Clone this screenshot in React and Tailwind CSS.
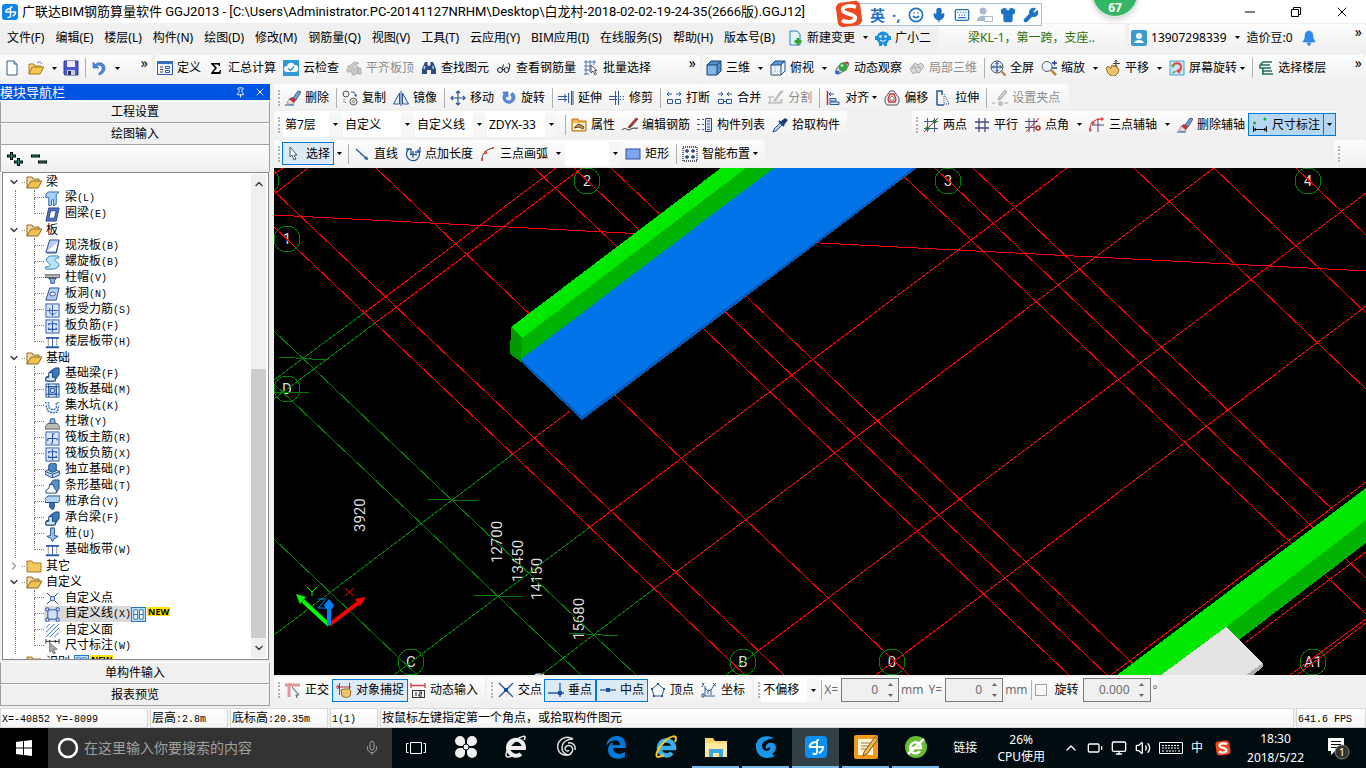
import { useState } from "react";
import clsx from "clsx";
import { Battery, ChevronDown, ChevronRight, ChevronUp, Keyboard, Mic, Minus, Monitor, Pin, Shirt, Smile, Volume2, Wrench, X } from "lucide-react";

const B = "#2b5797";

// 16x16 drawings used by the toolbars and the tree
const icons = {
  app: <><rect width="16" height="16" rx="3" fill="#0a84f0" /><path d="M8.500 3v9c0 1.500-2 2-3 1M3 8h10.500c0 2-1 3.500-3 4M8.500 4.500C5.500 4.500 4 6 3.500 8M8.500 3h2" stroke="#fff" strokeWidth="1.400" fill="none" /></>,
  doc: <><path d="M3 1h7l3 3v11H3z" fill="#fff" stroke="#3a5a8a" /><path d="M10 1v3h3" fill="#cfe0f5" stroke="#3a5a8a" /></>,
  open: <><path d="M1 14V4h5l1 2h6v2" fill="#f6d77c" stroke="#a87a20" /><path d="M1 14l3-7h12l-4 7z" fill="#f9c84e" stroke="#a87a20" /><path d="M9 3c2-2 4-1 5 1" fill="none" stroke="#4a6a9a" /></>,
  save: <><path d="M1 1h14v14H2l-1-1z" fill="#4a5bd0" stroke="#2a3a90" /><path d="M4 1h8v6H4z" fill="#eef" /><path d="M4 10h8v5H4z" fill="#c8cce8" /><path d="M5 11h3v4H5z" fill="#334" /></>,
  undo: <path d="M2 2v6h6L5.500 6c3-2 6 0 5.500 3-.3 2-2 3-3 4v2c4-1 6-4 6-7 0-5-6-7-10-3.500z" fill="#4f86e0" stroke="#2d5cae" strokeWidth=".6" />,
  define: <><rect x=".5" y="1.500" width="15" height="13" fill="#eef3fb" stroke="#2f5fae" /><path d="M0 1h16v3H0z" fill="#3b6fc4" /><path d="M3 7h3M3 9.500h3M3 12h3" stroke="#444" /><path d="M8.500 6.500h4v2h-4zM8.500 10.500h4v2h-4z" fill="none" stroke="#2f5fae" /></>,
  sigma: <path d="M3 3h9v3h-1L10 4.500H6L9 8l-3.500 4H11l1-2h1l-.5 4H3v-1l4-5-4-4z" fill="#000" />,
  cloud: <><rect width="16" height="16" fill="#2f9ad8" /><path d="M4 12a3 3 0 0 1 0-6 4 4 0 0 1 7.500-1A3.500 3.500 0 0 1 12 12z" fill="#fff" /><path d="M5 8.500l2.500 2L11 6.500" stroke="#2f9ad8" strokeWidth="1.500" fill="none" /></>,
  flatGray: <path d="M1 7l8-5 4 1-7 5zM1 9h6l5-3v7l-4 2H6v-3H1zM12 8h3v6h-3z" fill="#c9c9c9" stroke="#a5a5a5" strokeWidth=".7" />,
  binoc: <><path d="M4 2h2.500v3L8 6l1.500-1V2H12l3 7v5h-5v-4H6v4H1V9z" fill="#2e4c80" /><path d="M4 6L3 9M11.500 6l1 3" stroke="#b6cdf0" strokeWidth="1.500" /></>,
  glasses: <><circle cx="4" cy="10" r="2.500" fill="#dde8f5" stroke="#222" /><circle cx="10.500" cy="10" r="2.500" fill="#dde8f5" stroke="#222" /><path d="M6.500 9.500h2M13 9.500l1-5-2-1M6.500 8.500l1-4" stroke="#222" fill="none" /></>,
  batch: <><path d="M1 2h12M1 6h8M1 10h6M3 0v15M7 0v12M11 0v5M1 14h5" stroke="#5577aa" /><path d="M8 5v8l2-2 2 4 1.500-1-2-3.500H14z" fill="#fff" stroke="#555" /></>,
  cube: <><path d="M1 5l4-4h10v10l-4 4H1z" fill="#4f93d0" /><path d="M1 5h10v10H1z" fill="#7db8e8" /><path d="M1 5l4-4h10v10l-4 4H1zM1 5h10v10M11 5l4-4" fill="none" stroke="#1d3f66" /></>,
  cubeTop: <><path d="M1 5h10v10H1zM11 5l4-4v10l-4 4z" fill="#eef5fc" /><path d="M1 5l4-4h10l-4 4z" fill="#5b9bd8" /><path d="M1 5l4-4h10v10l-4 4H1zM1 5h10v10M11 5l4-4" fill="none" stroke="#274a7c" /><path d="M5 6v5M5 11h6M5 11l-4 4" stroke="#8fb3dd" strokeDasharray="1 1" /></>,
  orbit: <><ellipse cx="8" cy="8" rx="8" ry="3.500" transform="rotate(-40 8 8)" fill="#dde" stroke="#667" /><circle cx="9" cy="7" r="4.500" fill="#3aa04a" /><circle cx="8" cy="5.500" r="1.500" fill="#a8e6a8" /><circle cx="3.500" cy="12.500" r="2" fill="#2d6cc8" /><circle cx="13" cy="3" r="1.500" fill="#d33" /></>,
  localGray: <path d="M1 9l5-6 3 2 3-2 3 3-5 7-3-1-3 2zM4 5l5 8M8 4l4 6M2 8l10-1" fill="#ddd" stroke="#aaa" />,
  fit: <><circle cx="7" cy="7" r="6" fill="#e6eefa" stroke="#445" /><path d="M7 2.500v9M2.500 7h9M5.500 4L7 2.500 8.500 4M5.500 10L7 11.500 8.500 10M4 5.500L2.500 7 4 8.500M10 5.500L11.500 7 10 8.500" stroke="#1c3f94" fill="none" /><path d="M11.500 11.500l4 4" stroke="#b07a30" strokeWidth="2" /></>,
  zoom: <><circle cx="6" cy="6.500" r="5" fill="#eaf2fb" stroke="#557" /><path d="M10 10l5 5" stroke="#c08a2a" strokeWidth="2.500" /><path d="M11 3h5M13.500.5v5M11 8h5" stroke="#1c3f94" strokeWidth="1.300" /></>,
  hand: <><path d="M1 8l2-2 3 3V6l2-1 1 2 1-2 2 1v2l2 1-1 4-3 3H6l-3-3z" fill="#edc46a" stroke="#9a6d1c" /><path d="M11 0v7M8 3.500h7M9.500 1.500L11 0l1.500 1.500" stroke="#345" fill="none" /></>,
  screen: <><rect x="1" y="1" width="14" height="14" fill="#c5e6f5" stroke="#4aa3c8" /><path d="M4 7c0-5 8-5 8 0s-3 4-3 4" fill="none" stroke="#e8443a" strokeWidth="2" /><path d="M11 8l-4 3 4 3z" fill="#e8443a" /><path d="M2 5l4-1-2 4zM3 14c1-3 3-4 4-2" fill="#5aa02c" /></>,
  floors: <path d="M2 5l3-3h9M2 5h10M4 8h9M4 11h10M4 14h11M2 5v3h3v6" stroke="#23705c" strokeWidth="1.500" fill="none" />,
  erase: <><path d="M8 8l5-7 3 1-5 8z" fill="#6f9ee0" stroke="#234" strokeWidth=".7" /><path d="M4 9l3-2 4 3-2 3z" fill="#c03030" /><path d="M4 9l5 4-3 2-4-2z" fill="#f3d9d9" stroke="#555" strokeWidth=".5" /><path d="M0 15h9" stroke="#2b5797" /></>,
  copy: <><circle cx="4" cy="4" r="3" fill="#eee" stroke="#555" /><circle cx="11.500" cy="11.500" r="3.500" fill="#eee" stroke="#555" /><circle cx="11.500" cy="11.500" r="1.200" fill="none" stroke="#777" /><path d="M9 2h3l2 4M12.500 5l1.500 1.500V4" stroke="#2b5797" fill="none" /><path d="M2 9v3l3 1" stroke="#2b5797" strokeDasharray="1 1" fill="none" /></>,
  mirror: <path d="M6.500 3v11h-6zM9.500 3v11h6zM8 1v15" fill="#e8eef8" stroke={B} />,
  move: <path d="M8 1v14M1 8h14M6 3l2-2 2 2M6 13l2 2 2-2M3 6L1 8l2 2M13 6l2 2-2 2" stroke="#2b5797" strokeWidth="1.200" fill="none" />,
  rotate: <path d="M3 4a6 6 0 1 0 8.500-1.500L9.500 5a3.200 3.200 0 1 1-4.500 1l2 1V2H2z" fill="#5a8be0" stroke="#2b57a7" strokeWidth=".6" />,
  extend: <path d="M0 6.500h9M0 9.500h9M7 4v8M10.500 3v10M13.500 1v14M15 1v14" stroke={B} fill="none" />,
  trim: <path d="M0 6.500h8M0 9.500h8M6.500 1v14M9.500 1v14M11 6.500h1M14 6.500h1M11 9.500h1M14 9.500h1" stroke={B} fill="none" />,
  brk: <path d="M1 4h5M3 2L1 4l2 2M10 4h5M13 2l2 2-2 2M1.500 9.500h5v4h-5zM9.500 9.500h5v4h-5z" stroke={B} fill="none" />,
  join: <path d="M1 4h5M4 2l2 2-2 2M10 4h5M12 2l-2 2 2 2M1.500 9.500h5v4h-5zM9.500 9.500h5v4h-5zM6 11.500h4" stroke={B} fill="none" />,
  splitGray: <path d="M0 7h6M0 13h14v-4M2 13V7M12 2l3-1-7 9-2 1 1-2z" stroke="#aaa" fill="#ddd" />,
  align: <><path d="M2.500 1v14" stroke="#c22" strokeWidth="1.500" /><path d="M4 4h5M6 2L4 4l2 2" stroke={B} fill="none" /><path d="M5 8.500h6v2.500H5zM5 12h9v2.500H5z" fill="#dde6f5" stroke={B} /></>,
  offset: <><path d="M4 4l2-3h4l2 3 3 4v4l-2 3H3l-2-3V8z" fill="#f5f5f5" stroke="#456" /><path d="M6 4h4l2 5-1 3H5L4 9z" fill="#fdd" stroke="#c33" strokeWidth="1.300" /><path d="M6 10V8l2-2 2 2v2z" fill="#fff" stroke="#456" strokeWidth=".7" /></>,
  stretch: <><path d="M2 15V1h5v4M2 15h7" stroke={B} strokeWidth="1.500" fill="none" /><path d="M9 4l5 10M9 6v8h5" stroke={B} fill="none" strokeDasharray="1 1" /></>,
  gripGray: <path d="M0 13h3M12 13h4M7 12h3v3H7zM6 10l1-3 6-7 2 2-6 7z" stroke="#aaa" fill="#ccc" />,
  props: <><path d="M1 2h6l1 2h7v10H1z" fill="#f6b84a" stroke="#b5761c" /><path d="M2 6h12v7H2z" fill="#fff3d0" /><path d="M3 11l4-4 3 1 3 2-1 2-4-2z" fill="#c79b50" stroke="#543" /></>,
  rebar: <><path d="M0 13c4-4 5 2 9-1 3-2 4 0 7-1" stroke="#222" fill="none" /><path d="M7 9l7-8 2 1-7 8-3 1z" fill="#c03a2a" stroke="#432" strokeWidth=".7" /></>,
  list: <><path d="M8.500 1.500h6v13h-6z" fill="#dbe7f6" stroke="#446" /><path d="M10 4h3M10 7h3M10 10h3M10 12.500h3" stroke={B} /><path d="M0 2.500h3M0 7.500h3M0 12.500h3M5 2.500h2M5 7.500h2M5 12.500h2" stroke="#557" /></>,
  picker: <><path d="M8 5l5-4 3 2-4 5z" fill="#1d3f74" /><path d="M7 4l5 5" stroke="#1d3f74" strokeWidth="2" /><path d="M8 6l2 2-6 6-3 1 1-3z" fill="#aecdf2" stroke="#2b5797" /></>,
  twoPt: <><path d="M4.500 1v14M11.500 1v14M1 4.500h14M1 11.500h14" stroke="#445a8c" /><path d="M1 15L15 1" stroke="#b22" /><circle cx="4.500" cy="11.500" r="2" fill="#2c7a2c" /><circle cx="11.500" cy="4.500" r="2" fill="#2c7a2c" /></>,
  parallel: <path d="M5 1v14M11 1v14M1 5h14M1 11h14" stroke="#4a4a7c" strokeWidth="1.300" />,
  ptAngle: <><path d="M4 1v14M9 1v14M0 4.500h13M0 10.500h10" stroke="#4a4a7c" /><path d="M1 15L14 1" stroke="#c22" /><circle cx="13" cy="11" r="2" fill="#fff" stroke="#c22" strokeWidth="1.500" /></>,
  arcAxis: <><path d="M9 1v14M3 8h12" fill="none" stroke="#4a4a7c" /><path d="M1 13C1 6 4 2 14 2" fill="none" stroke="#d22" /><path d="M0 12h2v2H0zM3 5h2v2H3zM12 1h2v2h-2z" fill="#fff" stroke="#d22" /></>,
  dim: <><path d="M1.500 9v6M14.500 9v6M1 12.500h14M4 11l-2 1.500L4 14M12 11l2 1.500L12 14" stroke="#111" fill="none" /><circle cx="2.500" cy="6" r="1.500" fill="#2a2" /><circle cx="13" cy="2" r="1.500" fill="#2a2" /></>,
  select: <path d="M4 1v10l2-2 2 5 2-1-2-4h3z" fill="#fff" stroke="#456" />,
  line: <><path d="M2 3l11 10" stroke={B} strokeWidth="1.300" /><path d="M14 14l-4-1 3-3z" fill={B} /></>,
  ptLen: <><path d="M4 3a6.500 6.500 0 1 0 8.500.5M8 5v7M5 8.500h7" stroke={B} strokeWidth="1.300" fill="none" /><path d="M1 3h5v5M15 1v5h-5" stroke={B} fill="none" strokeWidth="1.300" /></>,
  arc: <><path d="M2 14C2 7 6 3 14 2" fill="none" stroke="#345" /><path d="M1 12h2v3H1zM4 5h3v3H4zM12 1h2v2h-2z" fill="#d9573a" /></>,
  rect: <rect x="1" y="3" width="14" height="10" fill="#7ea6ee" stroke="#2d4ea0" />,
  smart: <><rect x="1" y="1" width="14" height="14" fill="none" stroke="#223" strokeWidth="1.300" strokeDasharray="1 1" /><path d="M5 3v4M3 5h4M11 3v4M9 5h4M5 9v4M3 11h4M11 9v4M9 11h4" stroke="#1d3f74" strokeWidth="1.300" /></>,
  ortho: <><path d="M0 3h15M4 1v14" stroke="#e09a9a" strokeWidth="3" /><path d="M7 5l7 8-3 0 1 3" fill="#dfe8f2" stroke="#456" /></>,
  snap: <><path d="M0 5h15M3.500 1v12M13.500 1v7M1 3l2.500 2L1 7" stroke="#a33" fill="none" /><path d="M5 8l3-1 5 0 2 2-1 5-4 2-4-2z" fill="#edc46a" stroke="#9a6d1c" /></>,
  dyn: <><path d="M1 1v5M15 1v5M1 3.500h14" stroke="#c44" strokeWidth="1.300" /><rect x="2.500" y="8.500" width="12" height="7" fill="#eee" stroke="#333" /><path d="M6 10v4M9 10h2.500v2H9v2h3" stroke="#222" fill="none" /></>,
  cross: <><path d="M1 1l14 14M15 1L1 15" stroke={B} strokeWidth="1.300" /><path d="M6 6h4v4H6z" fill="#1c4fa0" /></>,
  perp: <><path d="M0 11h16M12 1v14" stroke={B} strokeWidth="1.300" /><path d="M10 9h4v4h-4z" fill="#1c4fa0" /></>,
  mid: <><path d="M0 8h16" stroke={B} strokeWidth="1.300" /><path d="M6 6h4v4H6z" fill="#1c4fa0" /></>,
  vertex: <><path d="M8 2l6 5-2 7H4L2 7z" fill="#f4f8fd" stroke={B} /><path d="M7 1h2v2H7zM1 6h2v2H1zM13 6h2v2h-2zM3 13h2v2H3zM11 13h2v2h-2z" fill={B} /></>,
  coord: <path d="M4 4v10h10M1 1l2 2M3 1L1 5M4 6l3 3 3-1 4-6M10 8v5M12 1l3 3M15 1l-3 3M1 12h2v3H1zM7 9v3" stroke="#335b9a" fill="none" />,
  beam: <path d="M1 3l3-2h11l-3 3v10l-3 2v-7l-2 1v5l-3 1V7H1z" fill="#a5d2f5" stroke="#2764b5" />,
  ring: <><path d="M4 1h11l-3 14H1z" fill="#5573c8" stroke="#24408e" /><path d="M6 4h6l-2 8H4z" fill="#fff" stroke="#24408e" /></>,
  slab: <path d="M5 1h10l-3 13H1zM1 14l1 1h10l3-13" fill="#b6cdf5" stroke="#2a4a9a" />,
  spiral: <path d="M6 1h8l1 2c-5 1-6 2-3 4 5 3 3 7-3 8H1l-1-2c5-1 7-2 4-4C0 6 1 2 6 1z" fill="#b9e2fb" stroke="#2b7fc0" />,
  cap: <><path d="M0 4h16v3H0z" fill="#bbb" stroke="#555" /><path d="M4 8h8l-2 2v3H6v-3z" fill="#8fb8ee" stroke="#2a4a9a" /></>,
  hole: <><path d="M5 1h10l-3 13H1z" fill="#b6cdf5" stroke="#2a4a9a" /><ellipse cx="8" cy="7.500" rx="3" ry="2" fill="#fff" stroke="#2a4a9a" /></>,
  barS: <><rect x="1" y="1" width="14" height="14" fill="#dbe8fb" stroke="#2a5ab0" /><path d="M2 8h12M8 2v12M5 5v5q0 2 3 2t4-2" fill="none" stroke="#2a5ab0" /></>,
  barF: <><rect x="1" y="1" width="14" height="14" fill="#dbe8fb" stroke="#2a5ab0" /><path d="M8 2v12M3 5h10M3 11h10M4 5v2M12 5v2M4 11V9M12 11V9" fill="none" stroke="#2a5ab0" strokeWidth="1.200" /></>,
  barR: <><rect x="1" y="1" width="14" height="14" fill="#dbe8fb" stroke="#2a5ab0" /><path d="M3 8h10M8 3v10M3 8v3M10 3H8M13 8v2M6 13h2" fill="none" stroke="#2a5ab0" strokeWidth="1.200" /></>,
  strip: <><path d="M1 3h14M1 13h14" stroke="#2a5ab0" strokeWidth="2" /><path d="M8 3v10" stroke="#2a5ab0" /><path d="M3.500 4v8M12.500 4v8" stroke="#222" strokeDasharray="1 1" /></>,
  fBeam: <><path d="M1 15v-4l4-2 1-5 5-3h4v7l-5 7z" fill="#3b79b8" stroke="#123f78" /><path d="M1 15v-4h3V6h4v5h3v4z" fill="#cfe4f7" stroke="#123f78" /></>,
  raft: <><path d="M1 1h14v14H1z" fill="#dceafa" stroke="#1d4f96" /><path d="M4 4h8v8H4zM6 6h4v4H6zM4 1v14M12 1v14M1 4h14M1 12h14" fill="none" stroke="#1d4f96" /></>,
  pit: <><path d="M3 5l2 6h6l2-6 2 1-2 7-5 2-5-2-2-7z" fill="#dbe8fb" /><path d="M0 4h4v5l3 2h3l2-2V4h4M1 7l2 6 5 2 5-1 2-7" fill="none" stroke="#2a5ab0" strokeDasharray="2 1" strokeWidth="1.300" /></>,
  pier: <><path d="M5 9l1-5h4l1 5z" fill="#8fb8ee" stroke="#2a4a9a" /><path d="M0 13l3-4h10l3 4v2H0z" fill="#bbb" stroke="#555" /></>,
  isolated: <><path d="M0 9l5-3 11 3-1 4-7 3-8-4z" fill="#c4dcf4" stroke="#174a86" /><path d="M4 2l3-2 5 1v7l-4 2-4-2z" fill="#4f87c4" stroke="#174a86" /><path d="M0 9l8 3 8-3M8 12v4" fill="none" stroke="#174a86" /></>,
  stripF: <><path d="M5 6l4-5h6v9l-3 5z" fill="#5c8fc8" stroke="#174a86" /><path d="M1 15v-3l3-2 1-4h4l1 4 2 2v3z" fill="#fff" stroke="#174a86" /></>,
  pileCap: <><path d="M0 4l3-3h13v4l-2 3H0z" fill="#b4d4f4" stroke="#174a86" /><path d="M5 8h5v5l-2 3-3-3z" fill="#3b6fb4" stroke="#174a86" /></>,
  pile: <path d="M6 1h4v8l4 1-3 2-1 0-2 3.500L6 12l-4-2 4-1z" fill="#9cc4ee" stroke="#174a86" />,
  pt: <><path d="M2 2l4 4M14 2l-4 4M2 14l4-4M14 14l-4-4" stroke="#1d3f74" /><path d="M6 6h4v4H6z" fill="#dbe8fb" stroke="#2a5ab0" /></>,
  poly: <><path d="M3 3h10v10H3z" fill="#cfe0f8" stroke="#24509a" /><path d="M1 1h3v3H1zM12 1h3v3h-3zM1 12h3v3H1zM12 12h3v3h-3z" fill="#fff" stroke="#24509a" /></>,
  hatch: <path d="M1 5l4-4M1 10l9-9M1 15L15 1M5 15L15 5M10 15l5-5" stroke="#2a6ac8" />,
  dimT: <><path d="M1 0v5M15 0v5M1 2.500h14M5 1v3M11 1v3" stroke="#222" /><path d="M5 4v10l2-2 2 4 2-1-2-4h4z" fill="#aaa" stroke="#777" /></>,
  book: <><rect x=".5" y=".5" width="15" height="15" fill="#bfe2fb" stroke="#1f6fc0" /><path d="M3 3h4v10H3zM9 3h4v10H9z" fill="#fff" stroke="#1f6fc0" /><path d="M3 8h4M9 8h4" stroke="#1f6fc0" /></>,
  folderOpen: <><path d="M1 14V3h5l1 2h6v3" fill="#f3dc9a" stroke="#8a6a2a" /><path d="M1 14l4-7h11l-4 7z" fill="#f4c24c" stroke="#8a6a2a" /></>,
  folder: <path d="M1 14V3h5l1 2h8v9z" fill="#f2c95e" stroke="#a17a28" />,
  newDoc: <><path d="M3 1h7l3 3v11H3z" fill="#e2f3fc" stroke="#2a7fb5" /><path d="M11 8v7M7.500 11.500h7" stroke="#32a532" strokeWidth="3" /></>,
  robot: <><circle cx="8" cy="8" r="6.500" fill="#1a8fe0" /><path d="M0 6h3v4H0zM13 6h3v4h-3zM4 13h3v3H4zM9 13h3v3H9z" fill="#1a8fe0" /><circle cx="5.500" cy="6.500" r="1.300" fill="#fff" /><circle cx="10.500" cy="6.500" r="1.300" fill="#fff" /><path d="M5 10q3 3 6 0" stroke="#fff" fill="none" /></>,
  user: <><rect width="16" height="16" rx="2" fill="#3e9bd2" /><circle cx="8" cy="6" r="3" fill="#fff" /><path d="M3 13c1-4 9-4 10 0z" fill="#fff" /></>,
  bell: <path d="M8 1c4 0 4 4 4 7l2 4H2l2-4c0-3 0-7 4-7zM6 13h4l-2 3z" fill="#2a8cf0" stroke="#1b6fc8" strokeWidth=".5" />,
  sogou: <><rect x="1" y="1" width="14" height="14" rx="3" fill="#f0491f" transform="rotate(-8 8 8)" /><path d="M12 4C7 2.500 4 4 4.500 6S12 8 11.500 10.500 6 13 4 11.500" fill="none" stroke="#fff" strokeWidth="2.200" /></>,
};

const Icon = ({ name, className = "size-4" }) => (
  <svg viewBox="0 0 16 16" className={clsx("shrink-0", className)} aria-hidden="true">
    {icons[name]}
  </svg>
);

const Caret = () => (
  <svg viewBox="0 0 5 3" className="h-[3px] w-[5px] shrink-0" aria-hidden="true">
    <path d="M0 0h5L2.500 3z" fill="#000" />
  </svg>
);

const Grip = () => <span className="ml-1 mr-[5px] h-4 shrink-0 border-l-2 border-dotted border-[#b4b4b4]" />;
const Sep = () => <span className="mr-[5px] h-5 w-px shrink-0 bg-[#b0b0b0]" />;
const More = () => <button className="ml-auto self-start px-1 text-sm leading-4" aria-label="更多">»</button>;

const Bar = ({ className, children }) => (
  <div className={clsx("flex h-[27px] shrink-0 items-center rounded-sm bg-linear-to-b from-[#fdfdfd] to-[#f0f0f0]", className)}>
    {children}
  </div>
);

// on: framed in blue while the tool is active
// menu: "near" keeps the arrow right behind the label
const Tool = ({ icon, label, menu, disabled, on }) => (
  <button
    disabled={disabled}
    className={clsx(
      "flex shrink-0 items-center gap-1",
      on ? "h-[23px] border border-[#0078d7] bg-[#dceaf6] px-[3px]" : "h-6 pr-[7px]",
      disabled && "text-[#8c8c8c]"
    )}
  >
    <Icon name={icon} />
    <span className={clsx("flex items-center", menu === "near" ? "gap-[3px]" : "gap-2")}>
      {label}
      {menu && <Caret />}
    </span>
  </button>
);

const Combo = ({ label, value, className }) => (
  <label className={clsx("flex h-6 shrink-0 items-center bg-white", className)}>
    <select aria-label={label} className="min-w-0 flex-1 appearance-none bg-white pl-[2px] outline-none">
      <option>{value}</option>
    </select>
    <span className="flex h-full w-3 items-center justify-center bg-[#f6f6f6]"><Caret /></span>
  </label>
);

const Spin = ({ id, label, value, className }) => (
  <span className={clsx("flex h-6 items-center border border-[#7a7a7a] bg-[#f0f0f0]", className)}>
    <input id={id} aria-label={label} defaultValue={value} className="w-0 min-w-0 flex-1 bg-transparent pr-1 text-right outline-none" />
    <span className="flex w-4 flex-col items-center gap-2">
      <svg viewBox="0 0 5 3" className="h-[3px] w-[5px]"><path d="M0 3h5L2.500 0z" fill="#666" /></svg>
      <svg viewBox="0 0 5 3" className="h-[3px] w-[5px]"><path d="M0 0h5L2.500 3z" fill="#666" /></svg>
    </span>
  </span>
);

const menus = [
  "文件(F)", "编辑(E)", "楼层(L)", "构件(N)", "绘图(D)", "修改(M)", "钢筋量(Q)", "视图(V)",
  "工具(T)", "云应用(Y)", "BIM应用(I)", "在线服务(S)", "帮助(H)", "版本号(B)",
];

const tree = [
  { label: "梁", open: true, items: [["beam", "梁", "L"], ["ring", "圈梁", "E"]] },
  {
    label: "板", open: true,
    items: [
      ["slab", "现浇板", "B"], ["spiral", "螺旋板", "B"], ["cap", "柱帽", "V"], ["hole", "板洞", "N"],
      ["barS", "板受力筋", "S"], ["barF", "板负筋", "F"], ["strip", "楼层板带", "H"],
    ],
  },
  {
    label: "基础", open: true,
    items: [
      ["fBeam", "基础梁", "F"], ["raft", "筏板基础", "M"], ["pit", "集水坑", "K"], ["pier", "柱墩", "Y"],
      ["barR", "筏板主筋", "R"], ["barF", "筏板负筋", "X"], ["isolated", "独立基础", "P"], ["stripF", "条形基础", "T"],
      ["pileCap", "桩承台", "V"], ["fBeam", "承台梁", "F"], ["pile", "桩", "U"], ["strip", "基础板带", "W"],
    ],
  },
  { label: "其它", open: false, items: [] },
  {
    label: "自定义", open: true,
    items: [["pt", "自定义点"], ["poly", "自定义线", "X"], ["hatch", "自定义面"], ["dimT", "尺寸标注", "W"]],
  },
  { label: "识别", open: false, isNew: true, items: [] },
];

const NewBadge = () => (
  <>
    <Icon name="book" className="h-[15px] w-[15px]" />
    <span className="ml-px mb-[5px] bg-[#ffe000] px-px text-[9px] font-bold leading-[9px]">NEW</span>
  </>
);

const TreeItem = ({ item, last, selected, onSelect }) => {
  const [icon, label, key] = item;
  return (
    <li className="flex h-4 items-center">
      <span className="ml-3 h-4 w-[19px] border-l border-dotted border-[#808080]" />
      <span className="flex h-4 w-[10px] flex-col">
        <span className="h-2 border-b border-l border-dotted border-[#808080]" />
        <span className={clsx("h-2", !last && "border-l border-dotted border-[#808080]")} />
      </span>
      <button onClick={onSelect} className={clsx("flex h-4 items-center gap-[5px] pl-px", selected && "bg-[#d9d9d9]")}>
        <Icon name={icon} className="h-[15px] w-[15px]" />
        <span>{label}{key && <span className="font-['Liberation_Mono',monospace] text-[10px]">({key})</span>}</span>
      </button>
      {selected && <NewBadge />}
    </li>
  );
};

const NavButton = ({ children }) => (
  <button className="h-[22px] w-full shrink-0 border border-[#a0a0a0] border-t-white bg-[#f0f0f0]">{children}</button>
);

const Sidebar = () => {
  const [selected, setSelected] = useState("自定义线");
  return (
    <aside className="flex w-[270px] shrink-0 flex-col">
      <div className="mb-px flex h-4 shrink-0 items-center bg-[#0054e3] text-[13px] leading-4 text-white">
        <span className="flex-1">模块导航栏</span>
        <button aria-label="固定" className="px-1"><Pin className="size-[11px]" /></button>
        <button aria-label="关闭" className="px-1"><X className="size-3" /></button>
      </div>
      <NavButton>工程设置</NavButton>
      <NavButton>绘图输入</NavButton>
      <div className="flex h-[27px] shrink-0 items-center gap-2 border-x border-[#a0a0a0] bg-linear-to-b from-[#fdfdfd] to-[#efefef] pl-[6px]">
        <button aria-label="全部展开">
          <svg viewBox="0 0 16 16" className="size-4"><path d="M0 5h9M4.500 1v8M7 11h9M11.500 7v8" stroke="#000" strokeWidth="3" /><path d="M1 5h7M4.500 2v6M8 11h7M11.500 8v6" stroke="#1aa08a" /></svg>
        </button>
        <button aria-label="全部折叠">
          <svg viewBox="0 0 16 16" className="size-4"><path d="M0 5h9M7 11h9" stroke="#000" strokeWidth="3" /><path d="M1 5h7M8 11h7" stroke="#1aa08a" /></svg>
        </button>
      </div>
      <div className="mr-px ml-[2px] flex min-h-0 flex-1 border border-[#828790] bg-white">
        <ul className="min-h-0 flex-1 overflow-hidden pt-px leading-4">
          {tree.map(group => (
            <li key={group.label}>
              <div className="flex h-4 items-center pl-[5px]">
                {group.open
                  ? <ChevronDown className="size-3 text-[#404040]" strokeWidth={3} />
                  : <ChevronRight className="size-3 text-[#a0a0a0]" strokeWidth={3} />}
                <span className="mr-px ml-[2px] w-[3px] border-b border-dotted border-[#808080]" />
                <Icon name={group.open ? "folderOpen" : "folder"} />
                <span className="ml-1">{group.label}</span>
                {group.isNew && <span className="ml-1 flex items-center"><NewBadge /></span>}
              </div>
              <ul>
                {group.items.map((item, i) => (
                  <TreeItem
                    key={item[1]}
                    item={item}
                    last={i === group.items.length - 1}
                    selected={selected === item[1]}
                    onSelect={() => setSelected(item[1])}
                  />
                ))}
              </ul>
            </li>
          ))}
        </ul>
        {/* scrollbar */}
        <div className="my-px mr-[2px] flex w-[15px] flex-col items-center bg-[#f0f0f0]">
          <ChevronUp className="my-1 size-3 text-[#404040]" strokeWidth={3} />
          <span className="flex-[173]" />
          <span className="w-full flex-[265] bg-[#cdcdcd]" />
          <ChevronDown className="my-1 size-3 text-[#404040]" strokeWidth={3} />
        </div>
      </div>
      <div className="mt-[2px] mb-[2px] flex shrink-0 flex-col">
        <NavButton>单构件输入</NavButton>
        <NavButton>报表预览</NavButton>
      </div>
    </aside>
  );
};

const redLines = [
  "274,215 1366,271",
  "274,227 745,675", "274,191 784,675", "376,168 909,675", "534,168 1069,675", "574,168 1107,675",
  "611,168 1145,675", "895,168 1366,614", "935,168 1366,578", "973,168 1333,510", "1134,168 1366,389",
  "1214,168 1366,313", "1296,168 1366,235",
  "274,174 283,168", "274,194 308,168", "556,168 364,313", "582,168 375,323", "570,411 513,454",
  "1067,168 590,527", "1214,168 655,588", "1366,193 758,651", "1366,306 876,675", "1366,482 1111,675",
  "1366,552 1245,643", "1366,619 1290,675", "1366,623 1297,675",
];

const greenLines = [
  "274,331 636,675", "274,384 581,675", "274,539 417,675",
  "364,313 274,380", "375,323 274,399", "513,454 274,635", "590,527 394,675", "655,588 541,675", "758,651 726,675",
  "279,357 328,360", "274,392 309,393", "428,499 477,501", "474,595 523,597", "569,633 618,636",
];

const axes = [
  ["", 266, 181], ["2", 587, 181], ["3", 948, 181], ["4", 1308, 181], ["1", 287, 239], ["D", 287, 389],
  ["C", 411, 662], ["B", 743, 662], ["0", 892, 662], ["A1", 1313, 662],
];

const dims = [["3920", 365, 532], ["12700", 502, 563], ["13450", 523, 582], ["14150", 542, 600], ["15680", 584, 640], ["0", 545, 681]];

const Viewport = () => (
  <div className="min-h-0 flex-1 bg-black">
    <svg viewBox="274 168 1092 507" preserveAspectRatio="xMidYMid slice" className="block h-full w-full" role="img" aria-label="三维模型">
      <g fontFamily="Roboto, sans-serif" fill="#dcdcdc" fontSize="15">
        {axes.map(([name, x, y]) => <text key={name} x={x} y={y + 5} textAnchor="middle">{name}</text>)}
        {dims.map(([value, x, y]) => <text key={value} transform={`translate(${x} ${y}) rotate(-90)`}>{value}</text>)}
      </g>
      <g fill="none" shapeRendering="crispEdges">
        {greenLines.map(p => <polyline key={p} points={p} stroke="#008000" />)}
        {redLines.map(p => <polyline key={p} points={p} stroke="#ff0000" />)}
        {axes.map(([name, x, y]) => <circle key={name} cx={x} cy={y} r="13" stroke="#008000" />)}
      </g>
      <g shapeRendering="crispEdges">
        <polygon points="511,327 721,168 746,168 522,338" fill="#00e800" />
        <polygon points="522,338 746,168 774,168 521,360" fill="#00b300" />
        <polygon points="511,327 522,338 521,362 510,354" fill="#009a00" />
        <polygon points="521,359 774,168 913,168 582,416" fill="#0074e8" />
        <polygon points="521,359 582,416 913,168 917,168 582,420 521,362" fill="#005cb8" />
        <polygon points="1366,488 1117,675 1161,675 1226,627 1366,520" fill="#00e800" />
        <polygon points="1226,627 1366,520 1366,543 1239,640" fill="#00b300" />
        <polygon points="1226,627 1263,663 1246,675 1161,675" fill="#e4e4e4" />
        <polygon points="1263,663 1263,667 1253,675 1246,675" fill="#b0b0b0" />
      </g>
      {/* axis tripod */}
      <g strokeWidth="4" fill="none">
        <path d="M329 625L303 601" stroke="#0f0" />
        <path d="M329 625L358 603" stroke="#f00" />
        <path d="M329 625V606" stroke="#0080ff" />
      </g>
      <path d="M296 594l10 3-6 7z" fill="#0f0" />
      <path d="M366 597l-11 2 5 7z" fill="#f00" />
      <path d="M329 599l5 6-2 4h-6l-2-4z" fill="#0080ff" />
      <path d="M307 587l5 5v4M317 587l-5 5" stroke="#0f0" fill="none" />
      <path d="M345 588l9 8M354 588l-9 8" stroke="#f00" />
      <path d="M318 599h8l-8 9h8" stroke="#0080ff" fill="none" />
    </svg>
  </div>
);

const SogouBar = () => (
  <div className="absolute top-[3px] left-[61.5%] flex h-[23px] w-[202px] items-center gap-[7px] border border-[#a9bfdc] bg-white pl-[29px] text-[#1f72c8]">
    <Icon name="sogou" className="absolute -top-1 -left-[6px] size-7" />
    <b className="text-[15px]">英</b>
    <b className="text-[15px]">·,</b>
    <Smile className="size-4" strokeWidth={2.5} />
    <Mic className="size-4" fill="#1f72c8" />
    <Keyboard className="size-4" />
    <svg viewBox="0 0 16 16" className="size-4"><circle cx="6" cy="4" r="3.500" fill="#a8b8cf" /><path d="M0 14c0-7 12-7 12 0z" fill="#a8b8cf" /><path d="M7.500 9.500h8v5h-8z" fill="#fff" stroke="#a8b8cf" /></svg>
    <Shirt className="size-4" fill="#1f72c8" />
    <Wrench className="size-4" fill="#1f72c8" />
  </div>
);

const TitleBar = () => (
  <header className="relative flex h-[23px] shrink-0 items-center overflow-hidden bg-white pl-[2px]">
    <Icon name="app" />
    <h1 className="ml-1 flex-1 truncate font-['Roboto','Noto_Sans_CJK_SC',sans-serif] text-[13px]">
      广联达BIM钢筋算量软件 GGJ2013 - [C:\Users\Administrator.PC-20141127NRHM\Desktop\白龙村-2018-02-02-19-24-35(2666版).GGJ12]
    </h1>
    <div className="flex items-center gap-[32px] pr-4">
      <button aria-label="最小化"><Minus className="size-4" strokeWidth={1.5} /></button>
      <button aria-label="还原">
        <svg viewBox="0 0 12 12" className="size-3"><path d="M1.500 3.500h7v7h-7zM3.500 3.500v-2h7v7h-2" fill="none" stroke="#000" /></svg>
      </button>
      <button aria-label="关闭"><X className="size-4" strokeWidth={1.5} /></button>
    </div>
  </header>
);

const MenuBar = () => (
  <nav className="flex h-[29px] shrink-0 items-center">
    <div className="flex items-center gap-[11px] pl-[7px]">
      {menus.map(m => <button key={m}>{m}</button>)}
    </div>
    <div className="ml-3 flex items-center">
      <Tool icon="newDoc" label="新建变更" menu />
      <Tool icon="robot" label="广小二" />
    </div>
    <Bar className="w-[187px] justify-center">
      <a href="#tip" className="text-[#2f7000]">梁KL-1，第一跨，支座..</a>
    </Bar>
    <Bar className="ml-1 min-w-0 flex-1 pl-[2px]">
      <Tool icon="user" label="13907298339" menu />
      <span className="mr-2">造价豆:0</span>
      <button aria-label="消息"><Icon name="bell" /></button>
      <More />
    </Bar>
  </nav>
);

const MainToolbar = () => (
  <div className="flex h-[32px] shrink-0 items-center gap-[3px]">
    <Bar className="w-[152px] pl-1">
      <button aria-label="新建"><Icon name="doc" /></button>
      <button aria-label="打开" className="ml-2 flex items-center gap-2"><Icon name="open" /><Caret /></button>
      <button aria-label="保存" className="mr-[6px] ml-[6px]"><Icon name="save" /></button>
      <Sep />
      <button aria-label="撤销" className="flex items-center gap-2"><Icon name="undo" /><Caret /></button>
      <More />
    </Bar>
    <Bar className="w-[545px] pl-[2px]">
      <Tool icon="define" label="定义" />
      <Tool icon="sigma" label="汇总计算" />
      <Tool icon="cloud" label="云检查" />
      <Tool icon="flatGray" label="平齐板顶" disabled />
      <Tool icon="binoc" label="查找图元" />
      <Tool icon="glasses" label="查看钢筋量" />
      <Tool icon="batch" label="批量选择" />
      <More />
    </Bar>
    <Bar className="min-w-0 flex-1 pl-[3px]">
      <Tool icon="cube" label="三维" menu />
      <Tool icon="cubeTop" label="俯视" menu />
      <Tool icon="orbit" label="动态观察" />
      <Tool icon="localGray" label="局部三维" disabled />
      <Sep />
      <Tool icon="fit" label="全屏" />
      <Tool icon="zoom" label="缩放" menu />
      <Tool icon="hand" label="平移" menu />
      <Tool icon="screen" label="屏幕旋转" menu="near" />
      <Sep />
      <Tool icon="floors" label="选择楼层" />
      <More />
    </Bar>
  </div>
);

const DrawToolbars = () => (
  <div className="flex h-[84px] shrink-0 flex-col">
    <div className="flex">
      <Bar className="pr-[2px]">
        <Grip />
        <Tool icon="erase" label="删除" />
        <Sep />
        <Tool icon="copy" label="复制" />
        <Tool icon="mirror" label="镜像" />
        <Sep />
        <Tool icon="move" label="移动" />
        <Tool icon="rotate" label="旋转" />
        <Sep />
        <Tool icon="extend" label="延伸" />
        <Tool icon="trim" label="修剪" />
        <Sep />
        <Tool icon="brk" label="打断" />
        <Tool icon="join" label="合并" />
        <Tool icon="splitGray" label="分割" disabled />
        <Sep />
        <Tool icon="align" label="对齐" menu="near" />
        <Tool icon="offset" label="偏移" />
        <Tool icon="stretch" label="拉伸" />
        <Sep />
        <Tool icon="gripGray" label="设置夹点" disabled />
      </Bar>
    </div>
    <div className="flex justify-between">
      <Bar>
        <Grip />
        <div className="-ml-[2px] flex gap-[2px] pr-2">
          <Combo label="楼层" value="第7层" className="w-[58px]" />
          <Combo label="构件类型" value="自定义" className="w-[70px]" />
          <Combo label="构件种类" value="自定义线" className="w-[70px]" />
          <Combo label="构件" value="ZDYX-33" className="w-[70px]" />
        </div>
        <Sep />
        <Tool icon="props" label="属性" />
        <Tool icon="rebar" label="编辑钢筋" />
        <Tool icon="list" label="构件列表" />
        <Tool icon="picker" label="拾取构件" />
      </Bar>
      <Bar className="mr-[30px]">
        <Grip />
        <Tool icon="twoPt" label="两点" />
        <Tool icon="parallel" label="平行" />
        <Tool icon="ptAngle" label="点角" menu />
        <Tool icon="arcAxis" label="三点辅轴" menu />
        <Tool icon="erase" label="删除辅轴" />
        <div className="-ml-1 flex h-[23px] items-center border border-[#0078d7] bg-[#b5d7f3]">
          <button className="flex items-center gap-1 px-[3px]"><Icon name="dim" />尺寸标注</button>
          <button aria-label="标注选项" className="flex h-full w-3 items-center justify-center border-l border-[#0078d7]"><Caret /></button>
        </div>
      </Bar>
    </div>
    <div className="mt-[2px] flex justify-between">
      <Bar>
        <span className="ml-1 mr-[2px] h-4 border-l-2 border-dotted border-[#b4b4b4]" />
        <Tool icon="select" label="选择" on />
        <button aria-label="选择方式" className="py-2 pr-[6px] pl-[3px]"><Caret /></button>
        <Sep />
        <Tool icon="line" label="直线" />
        <Tool icon="ptLen" label="点加长度" />
        <Tool icon="arc" label="三点画弧" menu />
        <Combo label="画弧方式" value="" className="-ml-[3px] mr-1 w-14" />
        <Tool icon="rect" label="矩形" />
        <Sep />
        <Tool icon="smart" label="智能布置" menu="near" />
      </Bar>
      <Bar className="w-8"><Grip /></Bar>
    </div>
  </div>
);

const SnapToolbar = () => (
  <div className="flex h-[33px] shrink-0 items-center gap-[2px] pb-[3px]">
    <Bar>
      <Grip />
      <Tool icon="ortho" label="正交" />
      <div className="-ml-1 pr-[2px]">
        <Tool icon="snap" label="对象捕捉" on />
      </div>
      <Tool icon="dyn" label="动态输入" />
    </Bar>
    <Bar>
      <Grip />
      <Tool icon="cross" label="交点" />
      <div className="-ml-[5px] flex pr-[2px]">
        <Tool icon="perp" label="垂点" on />
        <Tool icon="mid" label="中点" on />
      </div>
      <Tool icon="vertex" label="顶点" />
      <Tool icon="coord" label="坐标" />
    </Bar>
    <Bar className="text-[#6d6d6d]">
      <Grip />
      <Combo label="偏移方式" value="不偏移" className="-ml-1 mr-[2px] w-[58px] text-black" />
      <span className="mr-[2px] h-5 w-px bg-[#b0b0b0]" />
      <label htmlFor="dx" className="mr-[3px]">X=</label>
      <Spin id="dx" value="0" className="w-[58px]" />
      <span className="mx-[2px]">mm</span>
      <label htmlFor="dy" className="mr-[3px] ml-[3px]">Y=</label>
      <Spin id="dy" value="0" className="w-[58px]" />
      <span className="mr-[3px] ml-[2px]">mm</span>
      <span className="mr-[3px] h-5 w-px bg-[#b0b0b0]" />
      <input id="rot" type="checkbox" className="size-3 appearance-none border border-[#a0a0a0]" />
      <label htmlFor="rot" className="mr-1 ml-2 text-black">旋转</label>
      <Spin label="旋转角度" value="0.000" className="w-[68px]" />
      <span className="ml-[2px]">°</span>
    </Bar>
  </div>
);

const Cell = ({ className, children }) => (
  <span className={clsx("h-full border border-[#d7d7d7] bg-linear-to-b from-white to-[#f4f4f4] pl-px leading-[18px]", className)}>{children}</span>
);

const Mono = ({ children }) => <span className="font-['Liberation_Mono',monospace] text-[10px]">{children}</span>;

const StatusBar = () => (
  <footer className="flex h-5 shrink-0 gap-[2px] whitespace-pre">
    <Cell className="w-[148px]"><Mono>X=-40852 Y=-8099</Mono></Cell>
    <Cell className="w-[78px]">层高<Mono>:2.8m</Mono></Cell>
    <Cell className="w-[98px]">底标高<Mono>:20.35m</Mono></Cell>
    <Cell className="w-12"><Mono>1(1)</Mono></Cell>
    <Cell className="min-w-0 flex-1">按鼠标左键指定第一个角点，或拾取构件图元</Cell>
    <Cell className="w-[70px]"><Mono>641.6 FPS</Mono></Cell>
  </footer>
);

const tasks = [
  { name: "风车", art: <><path d="M11 11H6a5 5 0 1 1 5-5zM13 11V6a5 5 0 1 1 5 5zM13 13h5a5 5 0 1 1-5 5zM11 13v5a5 5 0 1 1-5-5z" fill="#eee" /><circle cx="12" cy="12" r="3" fill="#eee" stroke="#000c10" /></> },
  { name: "浏览器", art: <g fill="none" stroke="#eee"><path d="M5 13h15a8 8 0 1 0-3 6" strokeWidth="4" /><path d="M20 5c4-6-4-4-9 1C4 12-1 22 4 22c2 0 4-1 6-2" strokeWidth="1.500" /></g> },
  { name: "广联达旋风", art: <path d="M19 4C11-1 2 6 4 14c2 7 11 8 14 3 3-6-5-9-7-4 0 3 3 4 4 2M19 4c-6 0-11 3-11 9 0 5 5 8 9 6M14 8c5-1 8 3 7 7" fill="none" stroke="#ddd" strokeWidth="1.500" /> },
  { name: "Edge", art: <path d="M2 11C3 4 8 1 13 1c7 0 9 6 9 12H9c0 6 7 7 12 4v5c-8 4-17 1-17-7 0-4 2-7 6-8-1 1-2 2-2 3h8c0-7-10-6-14 1z" fill="#0078d7" /> },
  { name: "Internet Explorer", art: <><path d="M6 13h14a7.500 7.500 0 1 0-2 5" fill="none" stroke="#3aaef0" strokeWidth="4.500" /><path d="M21 7c4-9-5-6-11 0S0 22 4 22c2 0 4-1 6-2" fill="none" stroke="#f8c820" strokeWidth="2" /></> },
  { name: "文件资源管理器", line: true, art: <><path d="M1 3h8l2 3h12v16H1z" fill="#fbd66f" /><path d="M1 8h22v14H1z" fill="#fde9a2" /><path d="M5 22v-8h14v8h-4v-4H9v4z" fill="#38a8e8" /></> },
  { name: "广联达G", line: true, art: <path d="M20 3C8-2 1 5 2 13c1 10 12 12 19 8l-3-2c5-3 5-9 1-11-5-1-8 2-7 6l4-2c1 5-7 6-8-1C8 6 14 4 20 3z" fill="#1996e8" /> },
  { name: "钢筋算量", line: true, active: true, art: <><rect x="1" y="1" width="22" height="22" rx="4" fill="#0a90f5" /><path d="M13 5v12c0 2-3 3-4 1M5 12h14c0 3-2 5-4 6M13 7C8 7 6 9 5.500 12M13 5h2" fill="none" stroke="#fff" strokeWidth="2" /></> },
  { name: "笔记", line: true, art: <><rect width="24" height="24" rx="2" fill="#f29a1d" /><path d="M4 4h15v16H4z" fill="#fff6da" /><path d="M7 8h9M7 11h9M7 14h6" stroke="#a5703a" /><path d="M21 2L10 17l-1 4 4-2L24 4z" fill="#eebc55" stroke="#84500d" /></> },
  { name: "360浏览器", line: true, art: <><circle cx="12" cy="12" r="11" fill="#65bd35" /><path d="M7 13h10a5.500 5.500 0 1 0-1 3M20 4L4 19" fill="none" stroke="#fff" strokeWidth="2.500" /></> },
];

const Taskbar = () => (
  <div className="flex h-10 shrink-0 items-center bg-[#000c10] text-white">
    <button aria-label="开始" className="flex h-full w-12 items-center justify-center bg-black">
      <svg viewBox="0 0 16 16" className="size-4"><path d="M0 2l7-1v6.500H0zM8 1l8-1v7.500H8zM0 8.500h7V15l-7-1zM8 8.500h8V16l-8-1z" fill="#fff" /></svg>
    </button>
    <div className="flex h-full w-[344px] items-center bg-[#333] pr-3 pl-2">
      <svg viewBox="0 0 24 24" className="size-6"><circle cx="12" cy="12" r="9" fill="none" stroke="#fff" strokeWidth="2.500" /></svg>
      <input aria-label="搜索" placeholder="在这里输入你要搜索的内容" className="ml-1 min-w-0 flex-1 bg-transparent text-[14px] outline-none placeholder:text-[#a0a0a0]" />
      <Mic className="size-4 text-[#a0a0a0]" strokeWidth={1.5} />
    </div>
    <button aria-label="任务视图" className="flex w-12 justify-center">
      <svg viewBox="0 0 20 16" className="h-4 w-5"><path d="M4.500 2.500h11v11h-11zM2.500 3.500h-2v9h2M17.500 3.500h2v9h-2" fill="none" stroke="#fff" /></svg>
    </button>
    <div className="ml-[2px] flex h-full gap-[3px]">
      {tasks.map(t => (
        <button
          key={t.name}
          aria-label={t.name}
          className={clsx("flex w-[47px] items-center justify-center border-b-2", t.active && "bg-[#334046]", t.line ? "border-[#76b9ed]" : "border-transparent")}
        >
          <svg viewBox="0 0 24 24" className="size-6">{t.art}</svg>
        </button>
      ))}
    </div>
    <div className="ml-auto flex items-center gap-2 pr-4">
      <span className="mr-3">链接</span>
      <p className="mr-[10px] text-center leading-[17px]">26%<br />CPU使用</p>
      <ChevronUp className="size-4" />
      <Battery className="size-4" />
      <Monitor className="size-4" />
      <Volume2 className="size-4" />
      <svg viewBox="0 0 24 16" className="h-4 w-6"><path d="M.5 2.500h23v11H.5z" fill="none" stroke="#fff" /><path d="M3 5.500h18M3 8h18M3 11h2M7 11h10M19 11h2" stroke="#fff" strokeDasharray="2 1" /></svg>
      <span>中</span>
      <Icon name="sogou" className="mx-1 size-4" />
      <p className="mx-1 text-center leading-[19px]">18:30<br />2018/5/22</p>
      <button aria-label="通知" className="relative ml-[10px]">
        <svg viewBox="0 0 24 24" className="size-6"><path d="M2 2h16v13h-9l-4 4v-4H2z" fill="#fff" /><path d="M5 5.500h10M5 8.500h10M5 11.500h7" stroke="#000c10" /><circle cx="16" cy="16" r="7" fill="#333" stroke="#888" /><text x="16" y="20" fontSize="11" fill="#fff" textAnchor="middle" fontFamily="Noto Sans, sans-serif">1</text></svg>
      </button>
    </div>
  </div>
);

const App = () => (
  <div className="relative flex h-screen flex-col overflow-hidden bg-[#f0f0f0] font-['Noto_Sans','Noto_Sans_CJK_SC',sans-serif] text-[12px] leading-4 whitespace-nowrap text-black">
    <TitleBar />
    <MenuBar />
    <MainToolbar />
    <div className="flex min-h-0 flex-1 gap-1">
      <Sidebar />
      <main className="flex min-w-0 flex-1 flex-col">
        <DrawToolbars />
        <Viewport />
        <SnapToolbar />
      </main>
    </div>
    <StatusBar />
    <Taskbar />

    {/* floating widgets over the title bar */}
    <SogouBar />
    <div className="absolute -top-[30px] right-[227px] flex size-12 items-end justify-center rounded-full border-2 border-[#d8e8dc] bg-[#35b865] text-[12px] font-bold text-white shadow-md">67</div>
  </div>
);

export default App;
